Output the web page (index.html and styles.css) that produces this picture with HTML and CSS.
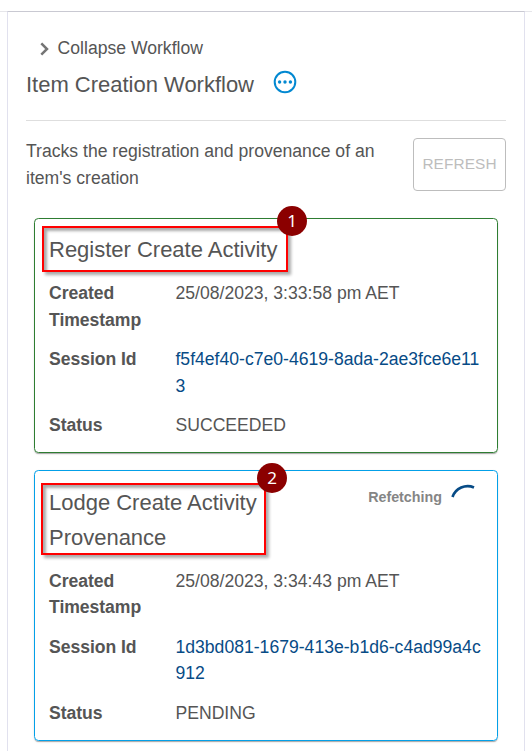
FILE: index.html
```html
<!DOCTYPE html>
<html lang="en">
<head>
<meta charset="utf-8">
<title>Item Creation Workflow</title>
<link rel="stylesheet" href="styles.css">
</head>
<body>
<main class="panel">
  <div class="collapse">
    <svg class="chevron" width="10" height="14" viewBox="0 0 10 14"><path d="M1.3 1.3 7 7l-5.700 5.700" fill="none" stroke="#757575" stroke-width="2.500"/></svg>
    <span>Collapse Workflow</span>
  </div>
  <header class="header">
    <h1 class="title">Item Creation Workflow</h1>
    <svg class="more" width="24" height="24" viewBox="0 0 24 24"><circle cx="12" cy="12" r="10.300" fill="none" stroke="#0288d1" stroke-width="2"/><g fill="#0288d1"><circle cx="6.600" cy="12" r="1.700"/><circle cx="12" cy="12" r="1.700"/><circle cx="17.400" cy="12" r="1.700"/></g></svg>
  </header>
  <div class="intro">
    <p class="description">Tracks the registration and provenance of an item's creation</p>
    <button class="refresh" disabled>REFRESH</button>
  </div>
  <section class="card card-success">
    <h2 class="card-title">Register Create Activity</h2>
    <div class="callout callout-first"><span class="badge">1</span></div>
    <dl class="details">
      <dt>Created Timestamp</dt><dd>25/08/2023, 3:33:58 pm AET</dd>
      <dt>Session Id</dt><dd class="link">f5f4ef40-c7e0-4619-8ada-2ae3fce6e113</dd>
      <dt>Status</dt><dd>SUCCEEDED</dd>
    </dl>
  </section>
  <section class="card card-pending">
    <div class="card-head">
      <h2 class="card-title">Lodge Create Activity Provenance</h2>
      <div class="refetch">
        <span>Refetching</span>
        <svg width="25" height="16" viewBox="0 0 25 16"><path d="M1.500 13A16 16 0 0 1 23 3.500" fill="none" stroke="#074b86" stroke-width="2.700"/></svg>
      </div>
    </div>
    <div class="callout callout-second"><span class="badge">2</span></div>
    <dl class="details">
      <dt>Created Timestamp</dt><dd>25/08/2023, 3:34:43 pm AET</dd>
      <dt>Session Id</dt><dd class="link">1d3bd081-1679-413e-b1d6-c4ad99a4c912</dd>
      <dt>Status</dt><dd>PENDING</dd>
    </dl>
  </section>
</main>
</body>
</html>
```
FILE: styles.css
```css
* { box-sizing: border-box; }
body {
  margin: 0;
  padding: 11px 7px 0;
  height: 751px;
  overflow: hidden;
  background: linear-gradient(#e6e6ea, #e6e6ea) 0 11px / 100% 1px no-repeat #fff;
  color: #555;
  font: 17.6px/26.4px "Liberation Sans", Arial, sans-serif;
}
h1, h2, p, dl, dd { margin: 0; }
.panel {
  height: 760px;
  padding: 23px 18px 0;
  border: 1px solid #e1e1ee;
  border-top-color: #c9c9d2;
}
.collapse {
  display: flex;
  align-items: center;
  gap: 8px;
  padding-left: 13.6px;
}
.chevron { margin-top: 1px; }
.header {
  display: flex;
  align-items: center;
  gap: 18.6px;
  height: 60px;
  padding-bottom: 13px;
  border-bottom: 1px solid #dedede;
}
.title, .card-title {
  font-size: 22px;
  font-weight: 400;
  line-height: 35.2px;
  letter-spacing: -0.01px;
}
.more { margin-top: -4px; }
.intro {
  display: flex;
  justify-content: space-between;
  align-items: flex-start;
  height: 96.2px;
  padding-top: 17px;
}
.description { width: 370px; }
.refresh {
  width: 93px;
  height: 53px;
  padding: 0 0 3px;
  border: 1px solid #bdbdbd;
  border-radius: 4px;
  background: #fff;
  color: #bdbdbd;
  font: 15.4px/27px "Liberation Sans", Arial, sans-serif;
  letter-spacing: 0.1px;
}
.card {
  position: relative;
  margin: 0 8px 17.2px;
  padding: 13.2px 14px;
  border: 1px solid;
  border-radius: 4.4px;
  box-shadow: 0 2px 1px -1px #0003, 0 1px 1px #0002, 0 1px 3px #0001;
}
.card-success { border-color: #2e7d32; }
.card-pending {
  padding-top: 14px;
  border-color: #03a0e8;
}
.card-pending .details { margin-top: 12.4px; }
.card-pending { padding-bottom: 13.8px; }
.card-head {
  display: flex;
  justify-content: space-between;
}
.card-head .card-title { width: 230px; }
.refetch {
  display: flex;
  align-items: flex-start;
  gap: 9px;
  margin-top: -0.8px;
  padding-right: 7px;
  color: #858585;
  font-size: 14.3px;
  font-weight: 700;
}
.details {
  display: grid;
  grid-template-columns: 113.3px 1fr;
  gap: 13.2px;
  margin-top: 13.2px;
}
dt {
  font-weight: 700;
  letter-spacing: -0.05px;
}
dd { width: 308px; word-break: break-all; }
.link { color: #074b86; }
/* Numbered outlines over the step names */
.callout {
  position: absolute;
  border: 2px solid #f00;
  box-shadow: 3px 3px 3px #0005, inset 3px 3px 3px #0005;
}
.callout-first { left: 7px; top: 7px; width: 246px; height: 46px; }
.callout-second { left: 6px; top: 12px; width: 225px; height: 72px; }
.badge {
  position: absolute;
  right: -21px;
  top: -22px;
  width: 30px;
  height: 30px;
  border-radius: 50%;
  background: #8b0000;
  color: #fff;
  font: 17px/29px "Noto Sans", sans-serif;
  text-align: center;
}
.callout-second .badge { right: -23px; }
```
